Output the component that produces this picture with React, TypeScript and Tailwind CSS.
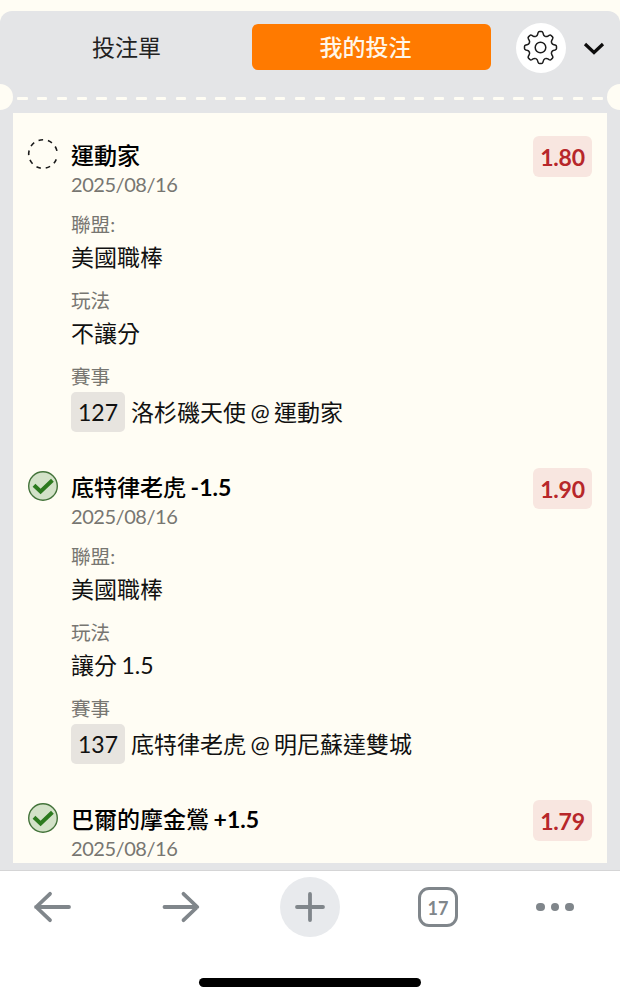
import React from 'react';

interface BetDetails {
  league: string;
  market: string;
  code: string;
  match: string;
}

interface Bet {
  pick: string;
  handicap?: string;
  date: string;
  odds: string;
  won: boolean;
  details?: BetDetails;
}

const bets: Bet[] = [
  {
    pick: '運動家',
    date: '2025/08/16',
    odds: '1.80',
    won: false,
    details: {
      league: '美國職棒',
      market: '不讓分',
      code: '127',
      match: '洛杉磯天使 @ 運動家',
    },
  },
  {
    pick: '底特律老虎',
    handicap: '-1.5',
    date: '2025/08/16',
    odds: '1.90',
    won: true,
    details: {
      league: '美國職棒',
      market: '讓分 1.5',
      code: '137',
      match: '底特律老虎 @ 明尼蘇達雙城',
    },
  },
  {
    pick: '巴爾的摩金鶯',
    handicap: '+1.5',
    date: '2025/08/16',
    odds: '1.79',
    won: true,
  },
];

const GearIcon: React.FC = () => (
  <svg width="36" height="36" viewBox="-17.5 -17.5 36 36" fill="none" stroke="#1b1b1b" strokeWidth="1.5">
    {[0, 45, 90, 135, 180, 225, 270, 315].map((angle) => (
      <path
        key={angle}
        transform={`rotate(${angle})`}
        d="M-4.6 -11.1C-3.5 -11.6 -3 -12.4 -2.8 -13.4L-2.5 -14.6C-2.2 -15.6 -1.7 -16 -1 -16H1C1.7 -16 2.2 -15.6 2.5 -14.6L2.8 -13.4C3 -12.4 3.5 -11.6 4.6 -11.1"
      />
    ))}
    <circle r="5.3" />
  </svg>
);

const StatusIcon: React.FC<{ won: boolean }> = ({ won }) => (
  <svg width="32" height="32" viewBox="0 0 32 32" fill="none">
    {won ? (
      <>
        <circle cx="16" cy="16" r="14.3" fill="#d3e2c8" stroke="#43733a" strokeWidth="1.4" />
        <path d="M7 15.2L13.6 21.4L25.4 10.2" stroke="#2c7a1e" strokeWidth="4" />
      </>
    ) : (
      <circle
        cx="16"
        cy="16"
        r="14.3"
        transform="rotate(22 16 16)"
        stroke="#1a1a1a"
        strokeWidth="1.6"
        strokeDasharray="4.6 4.9 4.6 4.9 4.6 4.9 4.6 4.9 4.6 4.9 4.6 4.9 4.6 4.9 4.6 4.9 4.6 9.25"
      />
    )}
  </svg>
);

const Field: React.FC<{ label: string; children: React.ReactNode }> = ({ label, children }) => (
  <div className="mb-3">
    <div className="h-7 text-[19.6px] leading-7 text-[#777671]">{label}</div>
    <div className="h-9 text-[23px] leading-9">{children}</div>
  </div>
);

const BetItem: React.FC<{ bet: Bet }> = ({ bet }) => (
  <article className="flex shrink-0 pt-[27px] pr-[15px] pl-3.5">
    <div className="-mt-0.5 w-11 shrink-0">
      <StatusIcon won={bet.won} />
    </div>
    <div className="flex-1 whitespace-nowrap">
      <h2 className="h-[30px] text-[23px] leading-[30px] font-medium text-black">
        {bet.pick}
        {bet.handicap && <span className="font-bold [word-spacing:-1px]"> {bet.handicap}</span>}
      </h2>
      <div className="h-7 text-[20px] leading-7 tracking-[-0.45px] text-[#777671]">{bet.date}</div>
      {bet.details && (
        <div className="mt-[13px] h-[234px]">
          <Field label="聯盟:">{bet.details.league}</Field>
          <Field label="玩法">
            <span className="[word-spacing:-1.5px]">{bet.details.market}</span>
          </Field>
          <Field label="賽事">
            <div className="flex gap-1.5 pt-px">
              <span className="flex h-10 w-[54px] items-center justify-center rounded-[5px] bg-[#e7e4df]">{bet.details.code}</span>
              <span className="leading-10 [word-spacing:-1.5px]">{bet.details.match}</span>
            </div>
          </Field>
        </div>
      )}
    </div>
    <div className="-mt-1 flex h-[41px] w-[59px] items-center justify-center rounded-md bg-[#f8e6e0] pt-0.5 text-[23px] font-bold tracking-[-0.2px] text-[#b7272a]">
      {bet.odds}
    </div>
  </article>
);

export default function App() {
  return (
    <div className="flex h-[1000px] w-[620px] flex-col overflow-hidden bg-[#fffdf4] pt-[11px] font-['Lato','Noto_Sans_CJK_TC',sans-serif] text-[#111]">
      <main className="flex h-[859px] flex-col rounded-t-xl bg-[#e4e5e7]">
        <header className="flex h-[73px] shrink-0 items-center">
          <button className="w-[252px] pl-px text-[23px] text-[#222]">投注單</button>
          <button className="-mt-px h-[46px] w-[239px] rounded-md bg-[#ff7a00] pr-3 text-[23px] font-medium text-[#fff6e8]">我的投注</button>
          <button className="ml-[25px] flex size-[50px] items-center justify-center rounded-full bg-white">
            <GearIcon />
          </button>
          <button className="ml-[17px]">
            <svg width="22" height="16" viewBox="0 0 22 16" fill="none" stroke="#0c0c0c" strokeWidth="3.2">
              <path d="M2 4L11 12.5L20 4" />
            </svg>
          </button>
        </header>

        {/* Ticket perforation */}
        <div className="relative flex h-[29px] shrink-0 items-center justify-between pr-[17px] pb-px pl-[17px]">
          <span className="absolute top-0 -left-[13px] size-[26px] rounded-full bg-[#fffdf4]" />
          {Array.from({ length: 30 }, (_, i) => (
            <span key={i} className="h-[3px] w-[10.5px] rounded-[1px] bg-[#fffdf4]" />
          ))}
          <span className="absolute top-0 -right-[13px] size-[26px] rounded-full bg-[#fffdf4]" />
        </div>

        <section className="mx-[13px] flex h-[750px] shrink-0 flex-col overflow-hidden bg-[#fffdf4]">
          {bets.map((bet) => (
            <BetItem key={bet.pick} bet={bet} />
          ))}
        </section>
      </main>

      <nav className="flex h-[130px] shrink-0 flex-col items-center border-t border-[#d5d5d6] bg-white">
        <div className="flex h-[72px] w-full items-center pl-[33px]">
          <svg width="38" height="32" viewBox="0 0 38 32" fill="none" stroke="#80868b" strokeWidth="3.8" strokeLinecap="round" strokeLinejoin="round">
            <path d="M36 16H3M17 2.8L3.2 16L17 29.2" />
          </svg>
          <svg className="ml-[91px]" width="38" height="32" viewBox="0 0 38 32" fill="none" stroke="#80868b" strokeWidth="3.8" strokeLinecap="round" strokeLinejoin="round">
            <path d="M2.5 16H35M21.5 2.8L35.3 16L21.5 29.2" />
          </svg>
          <div className="ml-20 flex size-[60px] items-center justify-center rounded-full bg-[#e8eaed]">
            <svg width="32" height="32" viewBox="0 0 32 32" stroke="#80868b" strokeWidth="3.8" strokeLinecap="round">
              <path d="M3 16H29M16 3V29" />
            </svg>
          </div>
          <div className="ml-[78px] flex size-10 items-center justify-center rounded-[11px] border-[3.5px] border-[#80868b] pt-0.5 text-[18px] font-bold text-[#80868b]">17</div>
          <div className="ml-[78px] flex gap-1.5">
            <span className="size-[8.5px] rounded-full bg-[#80868b]" />
            <span className="size-[8.5px] rounded-full bg-[#80868b]" />
            <span className="size-[8.5px] rounded-full bg-[#80868b]" />
          </div>
        </div>
        <div className="mt-[35px] h-[9px] w-[222px] rounded-full bg-black" />
      </nav>
    </div>
  );
}
